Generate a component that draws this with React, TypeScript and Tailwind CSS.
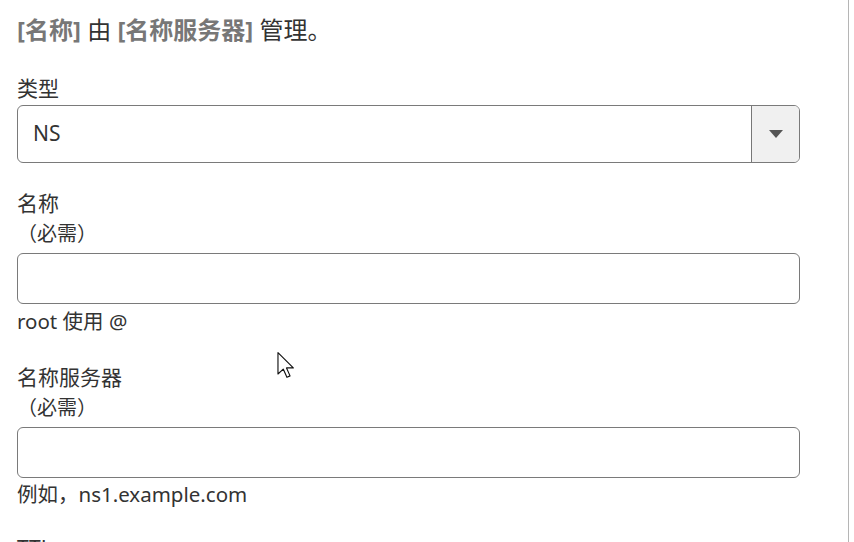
import React from "react";

const font = { fontFamily: '"Noto Sans", "Noto Sans CJK SC", sans-serif' };

export default function App() {
  return (
    <div className="relative w-[854px] h-[542px] overflow-hidden bg-white text-[#333]" style={font}>
      <div className="flex h-full">
        <div className="w-[848px] pl-[17px]">
          {/* heading */}
          <h1 className="mt-[16px] h-[28px] leading-[28px] text-[24px] whitespace-nowrap">
            <span className="font-bold text-[#777]">[名称]</span> 由{" "}
            <span className="font-bold text-[#777]">[名称服务器]</span> 管理。
          </h1>

          {/* type select */}
          <div className="mt-[30px] h-[28px] leading-[28px] text-[21px]">类型</div>
          <div className="mt-[3px] w-[783px] h-[58px] flex border border-[#7a7a7a] rounded-[6px] overflow-hidden">
            <div className="flex-1 flex items-center pl-[15px] text-[21px]">NS</div>
            <div className="w-[48px] flex items-center justify-center bg-[#f0f0f0] border-l border-[#777]">
              <svg width="14" height="8" viewBox="0 0 14 8">
                <path d="M0 0 H14 L7 8 Z" fill="#555" />
              </svg>
            </div>
          </div>

          {/* name */}
          <Field label="名称" top="mt-[25px]" hint="root 使用 @" hintTop="mt-[5px]" />

          {/* name server */}
          <Field label="名称服务器" top="mt-[29px]" hint="例如，ns1.example.com" hintTop="mt-[4px]" />

          <div className="mt-[27px] h-[30px] leading-[30px] text-[21px]">TTL</div>
        </div>
        <div className="w-px h-full bg-[#b5b5b5]" />
        <div className="flex-1 bg-white" />
      </div>

      {/* mouse pointer */}
      <svg className="absolute left-[277px] top-[352px]" width="19" height="27" viewBox="0 0 13 19">
        <path
          d="M0.5 0.5 V15.5 L4.2 12 L6.8 17.8 L9 16.8 L6.5 11.2 H11.3 Z"
          fill="#fff"
          stroke="#111"
          strokeWidth="0.8"
          strokeLinejoin="round"
        />
      </svg>
    </div>
  );
}

function Field({ label, top, hint, hintTop }: any) {
  return (
    <div className={top}>
      <div className="h-[30px] leading-[30px] text-[21px]">{label}</div>
      <div className="mt-[1px] h-[30px] leading-[30px] text-[20px]">（必需）</div>
      <div className="mt-[4px] w-[783px] h-[51px] border border-[#7a7a7a] rounded-[6px] bg-white" />
      <div className={`${hintTop} h-[24px] leading-[24px] text-[20.5px] whitespace-nowrap`}>{hint}</div>
    </div>
  );
}
